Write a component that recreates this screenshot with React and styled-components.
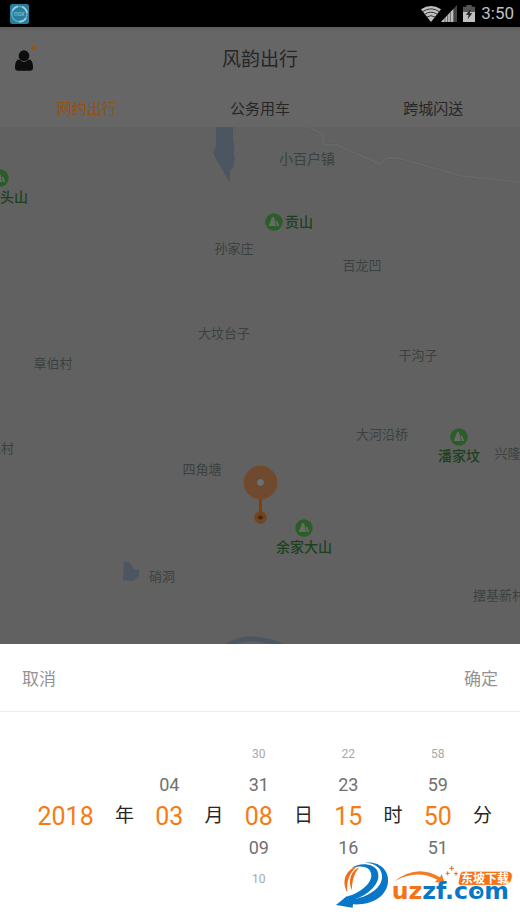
import React, { useState } from 'react'
import styled, { createGlobalStyle } from 'styled-components'

const GlobalStyle = createGlobalStyle`
  * {
    box-sizing: border-box;
  }

  body {
    margin: 0;
    background: #ffffff;
    font-family: Roboto, "Noto Sans CJK SC", sans-serif;
  }

  button {
    border: 0;
    padding: 0;
    background: none;
    font-family: inherit;
    cursor: pointer;
  }
`

const Screen = styled.div`
  position: relative;
  display: flex;
  flex-direction: column;
  min-height: 100vh;
  overflow: hidden;
`

const StatusBar = styled.div`
  display: flex;
  align-items: center;
  justify-content: space-between;
  height: 27px;
  padding: 0 6px 0 10px;
  background: #000000;
`

const StatusIcons = styled.div`
  display: flex;
  align-items: center;
  color: #c0c0c0;
  font-size: 17px;
  line-height: 27px;

  .battery {
    margin: 0 6px;
  }
`

const Header = styled.header`
  display: grid;
  grid-template-columns: 1fr auto 1fr;
  align-items: center;
  height: 61px;
  padding: 0 12px;
  background: linear-gradient(#5c5c5c, #666666 5px);

  h1 {
    margin: 0;
    color: #262626;
    font-size: 19px;
    font-weight: 400;
  }
`

const ProfileButton = styled.button`
  justify-self: start;
  height: 28px;
`

const Tabs = styled.nav`
  display: flex;
  height: 39px;
  background: #666666;
`

const Tab = styled.button`
  flex: 1;
  color: ${props => props.$active ? '#965010' : '#262626'};
  font-size: 15px;
`

const MapArea = styled.main`
  position: relative;
  flex: 1;
  min-height: 320px;
  overflow: hidden;
  background: #616161;
`

const Terrain = styled.svg`
  display: block;
  position: absolute;
  width: 100%;
  height: 100%;
`

const Place = styled.div`
  position: absolute;
  left: ${props => props.$x / 5.2}%;
  top: ${props => props.$y / 5.17}%;
  display: flex;
  flex-direction: ${props => props.$row ? 'row' : 'column'};
  align-items: center;
  gap: ${props => props.$row ? 2 : 0}px;
  transform: translate(-50%, -50%);
  color: ${props => props.$green ? '#1c401d' : '#3a4140'};
  font-size: ${props => props.$large ? 14 : 13}px;
  font-weight: ${props => props.$green ? 500 : 400};
  line-height: 20px;
  white-space: nowrap;
`

const Pin = styled.svg`
  position: absolute;
  left: 50%;
  top: 71%;
  transform: translate(-50%, -50%);
`

const Sheet = styled.section`
  background: #ffffff;
`

const SheetBar = styled.div`
  display: flex;
  justify-content: space-between;
  height: 68px;
  padding: 0 22px;
  border-bottom: 1px solid #ececec;
`

const SheetButton = styled.button`
  color: #939393;
  font-size: 17px;
`

const Picker = styled.div`
  display: grid;
  grid-template-columns: 18fr repeat(9, 11fr);
  align-items: center;
  padding: 26px 15px 30px 29px;
`

const Wheel = styled.div`
  display: flex;
  flex-direction: column;
  align-items: center;
  height: 156px;
`

const Unit = styled.span`
  color: #262626;
  font-size: 19px;
  line-height: 32px;
  text-align: center;
`

const sizes = [25, 18, 12]
const colors = ['#f57c13', '#707070', '#a8a8a8']

const Option = styled.button`
  height: ${props => props.$distance === 0 ? 32 : 31}px;
  color: ${props => colors[props.$distance]};
  font-size: ${props => sizes[props.$distance]}px;
  visibility: ${props => props.$blank ? 'hidden' : 'visible'};
`

const Watermark = styled.svg`
  position: absolute;
  right: 6px;
  bottom: 14px;
  pointer-events: none;
`

const places = [
  { name: '小百户镇', x: 307, y: 32, large: true },
  { name: '孙家庄', x: 234, y: 122 },
  { name: '百龙凹', x: 362, y: 139 },
  { name: '大坟台子', x: 224, y: 207 },
  { name: '干沟子', x: 418, y: 229 },
  { name: '章伯村', x: 53, y: 237 },
  { name: '大河沿桥', x: 382, y: 308 },
  { name: '朱村', x: 1, y: 322 },
  { name: '兴隆村', x: 514, y: 327 },
  { name: '四角塘', x: 202, y: 343 },
  { name: '硝洞', x: 162, y: 450 },
  { name: '摆基新村', x: 499, y: 469 },
  { name: '头山', x: 14, y: 70, green: true },
  { name: '贡山', x: 289, y: 95, green: true, icon: true, row: true },
  { name: '潘家坟', x: 459, y: 320, green: true, icon: true },
  { name: '余家大山', x: 304, y: 411, green: true, icon: true }
]

const wheels = [
  { label: '年份', unit: '年', values: ['', '', '2018', '', ''] },
  { label: '月份', unit: '月', values: ['', '04', '03', '', ''] },
  { label: '日期', unit: '日', values: ['30', '31', '08', '09', '10'] },
  { label: '小时', unit: '时', values: ['22', '23', '15', '16', ''] },
  { label: '分钟', unit: '分', values: ['58', '59', '50', '51', ''] }
]

const tabs = ['网约出行', '公务用车', '跨城闪送']

const AppIcon = () => (
  <svg width="19" height="20" viewBox="0 0 57 60">
    <rect width="57" height="60" rx="7" fill="#267f9f" />
    <circle cx="28" cy="30" r="23" fill="none" stroke="#69aabd" strokeWidth="4" />
    <path d="M8 19A23 23 0 0 1 23 7M36 8A23 23 0 0 1 51 27M48 42A23 23 0 0 1 27 53" fill="none" stroke="#a9cdd6" strokeWidth="5" />
    <text x="28" y="37" textAnchor="middle" fontFamily="Roboto, sans-serif" fontSize="20" fill="#8fc3d1">nox</text>
  </svg>
)

const WifiIcon = () => (
  <svg width="20" height="16" viewBox="0 0 60 48">
    <path d="M0 10Q30-10 60 10L30 48Z" fill="#c0c0c0" />
    <path d="M5 17Q30 0 55 17M11 25Q30 12 49 25M18 33Q30 25 42 33" fill="none" stroke="#333333" strokeWidth="3" />
  </svg>
)

const SignalIcon = () => (
  <svg width="16" height="17" viewBox="0 0 48 51">
    <path d="M48 0V51H0Z" fill="#444444" />
    <path d="M37 12V51H0Z" fill="#c0c0c0" />
    <path d="M12 36V51M20 28V51M28 20V51" stroke="#333333" strokeWidth="2" />
  </svg>
)

const BatteryIcon = () => (
  <svg className="battery" width="12" height="17" viewBox="0 0 36 51">
    <path d="M10 0H26V5H36V51H0V5H10Z" fill="#555555" />
    <path d="M0 21H36V51H0Z" fill="#c0c0c0" />
    <path d="M24 12L8 29H17L14 43L28 25H20Z" fill="#222222" />
  </svg>
)

const ProfileIcon = () => (
  <svg width="26" height="28" viewBox="0 0 78 84">
    <circle cx="36" cy="35" r="16" fill="#0c0c0c" />
    <path d="M17 47Q24 46 27 50Q36 57 45 50Q49 46 55 47Q63 52 63 71Q63 80 54 80H18Q9 80 9 71Q9 52 17 47Z" fill="#0c0c0c" />
    <circle cx="64" cy="12" r="7" fill="#9a5010" />
  </svg>
)

const HillIcon = () => (
  <svg width="18" height="18" viewBox="0 0 54 54">
    <circle cx="27" cy="27" r="26" fill="#2b5d29" />
    <path d="M11 39L20 15Q24 8 28 15L33 39ZM36 39L32 25Q35 20 38 26L43 39Z" fill="#666b65" />
  </svg>
)

const Swirl = () => (
  <g>
    <path d="M122 38C165 33 192 62 189 95C186 136 145 166 84 163L83 173L33 165L65 139L70 149C120 147 168 118 171 84C173 57 153 39 122 38Z" fill="#0877c8" />
    <path d="M79 55C100 38 143 38 157 62C173 100 125 140 74 153L62 141C99 132 139 105 139 76C138 48 106 44 79 55Z" fill="#0877c8" />
    <path d="M99 47C58 60 50 97 67 127C64 96 72 66 99 47Z" fill="#f26b16" />
    <path d="M103 52C78 62 67 94 81 121C81 94 86 71 103 52Z" fill="#f26b16" />
  </g>
)

const SiteMark = () => (
  <Watermark width="179" height="50" viewBox="30 30 537 150" role="img" aria-label="东坡下载 uzzf.com">
    <Swirl />
    <path d="M208 94Q276 40 345 82L350 72L359 98L329 97L337 89Q275 56 208 94Z" fill="#f47b20" />
    <path d="M380 48V62M373 55H387M368 64V76M362 70H374M393 65V77M387 71H399" stroke="#f26b16" strokeWidth="3" />
    <g fontFamily="DejaVu Sans, sans-serif" fontSize="71" fontWeight="700">
      <text x="200" y="148" fill="#f57316">uz<tspan fill="#0877c8">zf.com</tspan></text>
    </g>
    <circle cx="457" cy="128" r="10" fill="#ffffff" />
    <circle cx="459" cy="127" r="5" fill="#0877c8" />
    <path d="M416 64H546Q562 64 562 79Q560 106 530 106H406Q399 106 400 98L404 76Q406 64 416 64Z" fill="#f57316" stroke="#ffffff" strokeWidth="2" />
    <text x="408" y="98" fontFamily="Noto Sans CJK SC, sans-serif" fontSize="36" fontWeight="700" fill="#ffffff">东坡下载</text>
  </Watermark>
)

const MapView = () => (
  <MapArea>
    <Terrain viewBox="0 0 520 517" preserveAspectRatio="none">
      <path d="M308 0L322 6L324 18L337 18L380 37L387 31L398 31L462 49L520 55" fill="none" stroke="#5d5d5d" strokeWidth="3" />
      <path d="M308 0L322 6L324 18L337 18L380 37L387 31L398 31L462 49L520 55" fill="none" stroke="#676767" strokeWidth="2" />
      <path d="M216 0H233V13L234 15V28L235 31L233 40L230 44V54L228 53L215 30L213 26L216 19Z" fill="#4b5661" />
      <path d="M124 435L130 436L134 442L139 443V449Q136 454 130 454L123 453Z" fill="#4b5661" />
      <path d="M226 520Q238 511 252 512Q272 513 284 520" fill="none" stroke="#4b5661" strokeWidth="5" />
    </Terrain>
    <Place $x={0} $y={51}><HillIcon /></Place>
    {places.map(place => (
      <Place key={place.name} $x={place.x} $y={place.y} $green={place.green} $large={place.large || place.green} $row={place.row}>
        {place.icon && <HillIcon />}
        <span>{place.name}</span>
      </Place>
    ))}
    <Pin width="36" height="60" viewBox="0 0 36 60">
      <circle cx="18.5" cy="18.5" r="16.5" fill="#6f4a2e" stroke="#7b4b26" />
      <circle cx="18.5" cy="18.5" r="4" fill="#707070" stroke="#5d4a3b" />
      <circle cx="18.5" cy="53.5" r="6" fill="#6d4627" stroke="#80481b" />
      <path d="M17 35H20V53H17Z" fill="#824006" />
      <ellipse cx="18.5" cy="53.5" rx="2.5" ry="2" fill="#4a2509" />
    </Pin>
  </MapArea>
)

const App = () => {
  const [activeTab, setActiveTab] = useState(0)

  return (
    <Screen>
      <GlobalStyle />
      <StatusBar>
        <AppIcon />
        <StatusIcons>
          <WifiIcon />
          <SignalIcon />
          <BatteryIcon />
          <span>3:50</span>
        </StatusIcons>
      </StatusBar>
      <Header>
        <ProfileButton aria-label="个人中心"><ProfileIcon /></ProfileButton>
        <h1>风韵出行</h1>
      </Header>
      <Tabs>
        {tabs.map((tab, index) => (
          <Tab key={tab} $active={index === activeTab} onClick={() => setActiveTab(index)}>{tab}</Tab>
        ))}
      </Tabs>
      <MapView />
      <Sheet>
        <SheetBar>
          <SheetButton>取消</SheetButton>
          <SheetButton>确定</SheetButton>
        </SheetBar>
        <Picker>
          {wheels.map(wheel => (
            <React.Fragment key={wheel.unit}>
              <Wheel role="listbox" aria-label={wheel.label}>
                {wheel.values.map((value, index) => (
                  <Option
                    key={index}
                    role="option"
                    aria-selected={index === 2}
                    $distance={Math.abs(index - 2)}
                    $blank={!value}
                  >
                    {value}
                  </Option>
                ))}
              </Wheel>
              <Unit>{wheel.unit}</Unit>
            </React.Fragment>
          ))}
        </Picker>
      </Sheet>
      <SiteMark />
    </Screen>
  )
}

export default App
